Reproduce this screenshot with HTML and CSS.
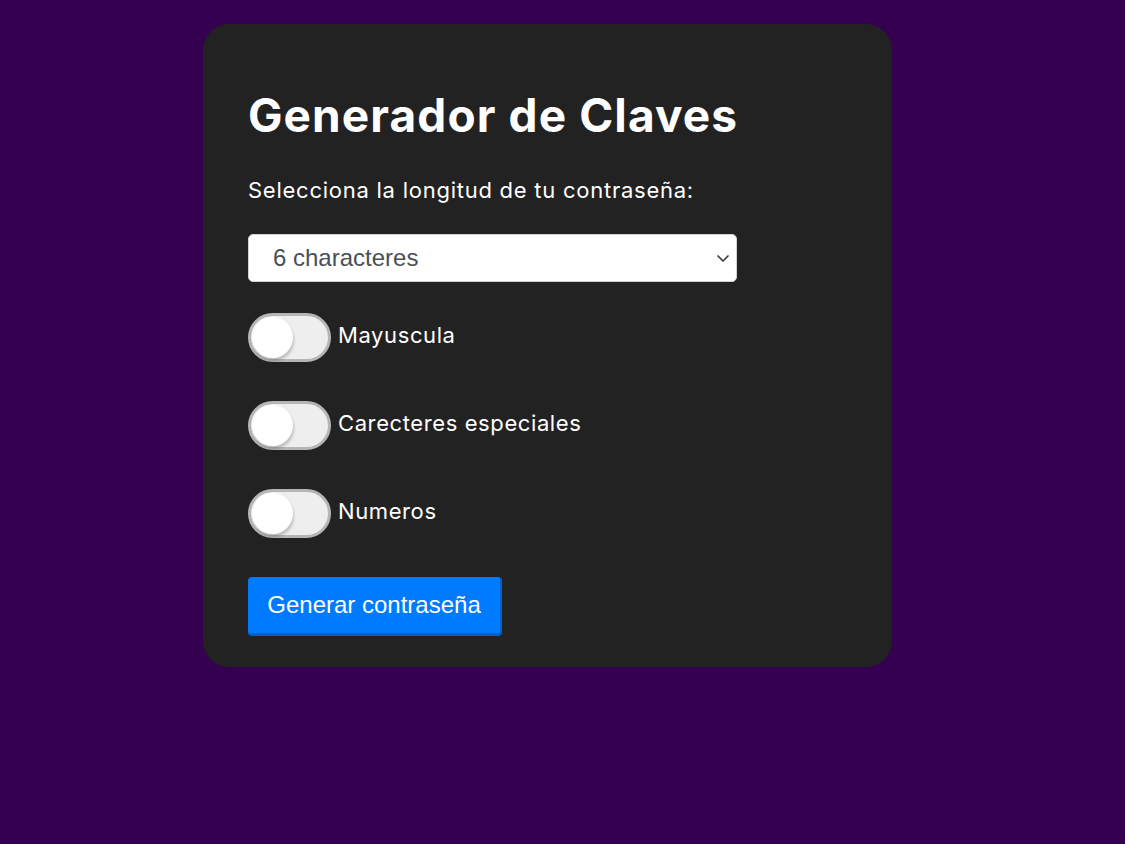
FILE: index.html
```html
<!DOCTYPE html>
<html lang="es">
<head>
<meta charset="utf-8">
<title>Generador de Claves</title>
<link rel="stylesheet" href="styles.css">
</head>
<body>
<main class="card">
  <h1 class="title">Generador de Claves</h1>
  <p class="subtitle">Selecciona la longitud de tu contraseña:</p>
  <div class="select">
    <span class="select-text">6 characteres</span>
    <svg class="chevron" width="14" height="9" viewBox="0 0 14 9"><path d="M2 2 L7 7 L12 2" fill="none" stroke="#3a3a3a" stroke-width="1.7" stroke-linecap="round" stroke-linejoin="round"/></svg>
  </div>
  <div class="options">
    <label class="option"><span class="switch"><span class="knob"></span></span><span class="option-label">Mayuscula</span></label>
    <label class="option"><span class="switch"><span class="knob"></span></span><span class="option-label">Carecteres especiales</span></label>
    <label class="option"><span class="switch"><span class="knob"></span></span><span class="option-label">Numeros</span></label>
  </div>
  <button class="btn">Generar contraseña</button>
</main>
</body>
</html>
```
FILE: styles.css
```css
html, body {
  margin: 0;
  padding: 0;
}
body {
  background: #350050;
  min-height: 844px;
  font-family: Inter, Roboto, "Liberation Sans", sans-serif;
  color: #fff;
}
.card {
  box-sizing: border-box;
  width: 689px;
  margin: 24px 0 0 203px;
  padding: 64px 45px 31px;
  background: #222222;
  border-radius: 26px;
  display: flex;
  flex-direction: column;
  align-items: flex-start;
}
.title {
  margin: 0;
  font-family: Inter, Roboto, sans-serif;
  font-weight: 700;
  font-size: 46px;
  line-height: 54px;
  letter-spacing: 1.1px;
}
.subtitle {
  margin: 34px 0 0;
  font-size: 22px;
  line-height: 28px;
  letter-spacing: 0.75px;
}
.select {
  box-sizing: border-box;
  margin-top: 30px;
  width: 489px;
  height: 48px;
  background: #fff;
  border: 1px solid #ced4da;
  border-radius: 5px;
  display: flex;
  align-items: center;
  justify-content: space-between;
  padding: 0 6px 0 24px;
}
.select-text {
  font-family: "Liberation Sans", Arial, sans-serif;
  font-size: 24px;
  color: #495057;
}
.options {
  margin-top: 31px;
  display: flex;
  flex-direction: column;
  gap: 39px;
}
.option {
  display: flex;
  align-items: center;
  gap: 7px;
}
.switch {
  box-sizing: border-box;
  width: 83px;
  height: 49px;
  border: 3px solid #b5b5b5;
  background: #eeeeee;
  border-radius: 25px;
  position: relative;
  display: block;
}
.knob {
  position: absolute;
  left: 1px;
  top: 1px;
  width: 41px;
  height: 41px;
  border-radius: 50%;
  background: #fff;
  box-shadow: 1px 3px 3px rgba(0,0,0,0.2);
}
.option-label {
  font-size: 22px;
  letter-spacing: 0.6px;
  margin-top: -6px;
}
.btn {
  margin-top: 39px;
  width: 254px;
  height: 59px;
  background: #007bff;
  color: #fff;
  border: none;
  border-bottom: 3px solid #0062cc;
  border-right: 2px solid #0062cc;
  border-radius: 4px;
  font-family: "Liberation Sans", Arial, sans-serif;
  font-size: 24px;
  padding: 0;
}
```
